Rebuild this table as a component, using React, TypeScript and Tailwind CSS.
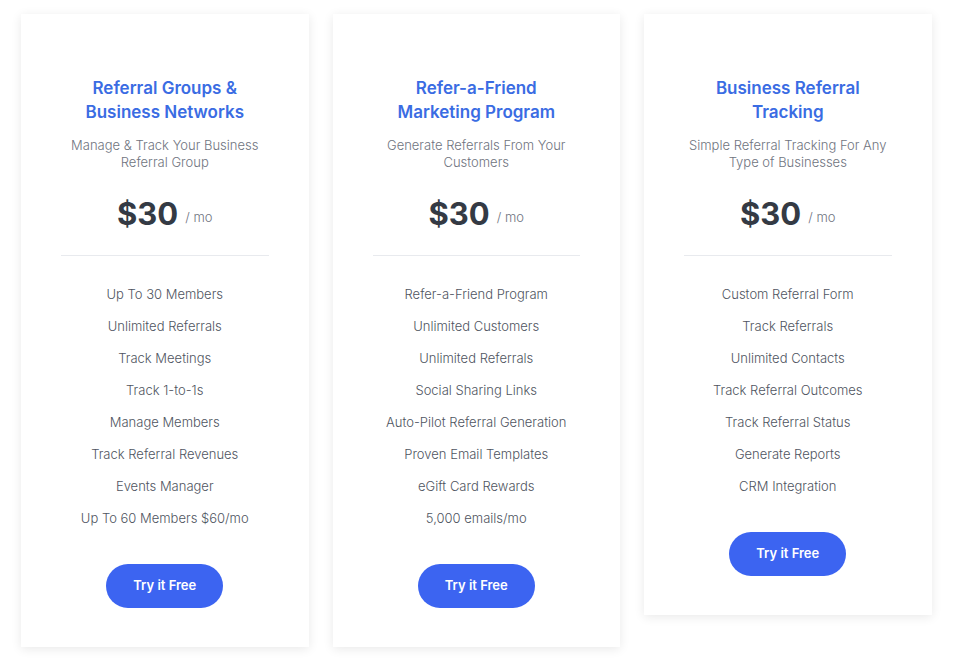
const plans = [
  {
    title: ["Referral Groups &", "Business Networks"],
    subtitle: ["Manage & Track Your Business", "Referral Group"],
    features: [
      "Up To 30 Members",
      "Unlimited Referrals",
      "Track Meetings",
      "Track 1-to-1s",
      "Manage Members",
      "Track Referral Revenues",
      "Events Manager",
      "Up To 60 Members $60/mo",
    ],
  },
  {
    title: ["Refer-a-Friend", "Marketing Program"],
    subtitle: ["Generate Referrals From Your", "Customers"],
    features: [
      "Refer-a-Friend Program",
      "Unlimited Customers",
      "Unlimited Referrals",
      "Social Sharing Links",
      "Auto-Pilot Referral Generation",
      "Proven Email Templates",
      "eGift Card Rewards",
      "5,000 emails/mo",
    ],
  },
  {
    title: ["Business Referral", "Tracking"],
    subtitle: ["Simple Referral Tracking For Any", "Type of Businesses"],
    features: [
      "Custom Referral Form",
      "Track Referrals",
      "Unlimited Contacts",
      "Track Referral Outcomes",
      "Track Referral Status",
      "Generate Reports",
      "CRM Integration",
    ],
  },
];

export default function App() {
  return (
    <div className="min-h-[672px] bg-white font-['Inter','Liberation_Sans',sans-serif]">
      <div className="flex items-start gap-6 pl-[21px] pt-[14px]">
        {plans.map((plan, i) => (
          <div
            key={i}
            className="w-[287.5px] bg-white px-10 pt-[62px] pb-[39px] text-center shadow-[0_2px_10px_rgba(0,0,0,0.09)]"
          >
            <h3 className="text-[17px] font-semibold leading-6 text-[#3a6ce3]">
              {plan.title[0]}
              <br />
              {plan.title[1]}
            </h3>
            <p className="mt-[13px] text-[13px] font-light leading-[17px] text-[#6f7480]">
              {plan.subtitle[0]}
              <br />
              {plan.subtitle[1]}
            </p>
            <div className="mt-[25px] flex h-9 items-center justify-center">
              <span className="text-[31px] font-bold text-[#343a44]">$30</span>
              <span className="ml-[7px] mt-2 text-[13px] font-light text-[#6f7480]">/ mo</span>
            </div>
            <div className="mt-[23px] h-px bg-[#e8eaee]" />
            <ul className="mt-[23px]">
              {plan.features.map((f) => (
                <li
                  key={f}
                  className="flex h-8 items-center justify-center text-[13px] font-light text-[#4f5561]"
                >
                  {f}
                </li>
              ))}
            </ul>
            <button className="mt-[29px] h-11 w-[117px] rounded-full bg-[#3c64f1] text-[13px] font-semibold text-white">
              Try it Free
            </button>
          </div>
        ))}
      </div>
    </div>
  );
}
